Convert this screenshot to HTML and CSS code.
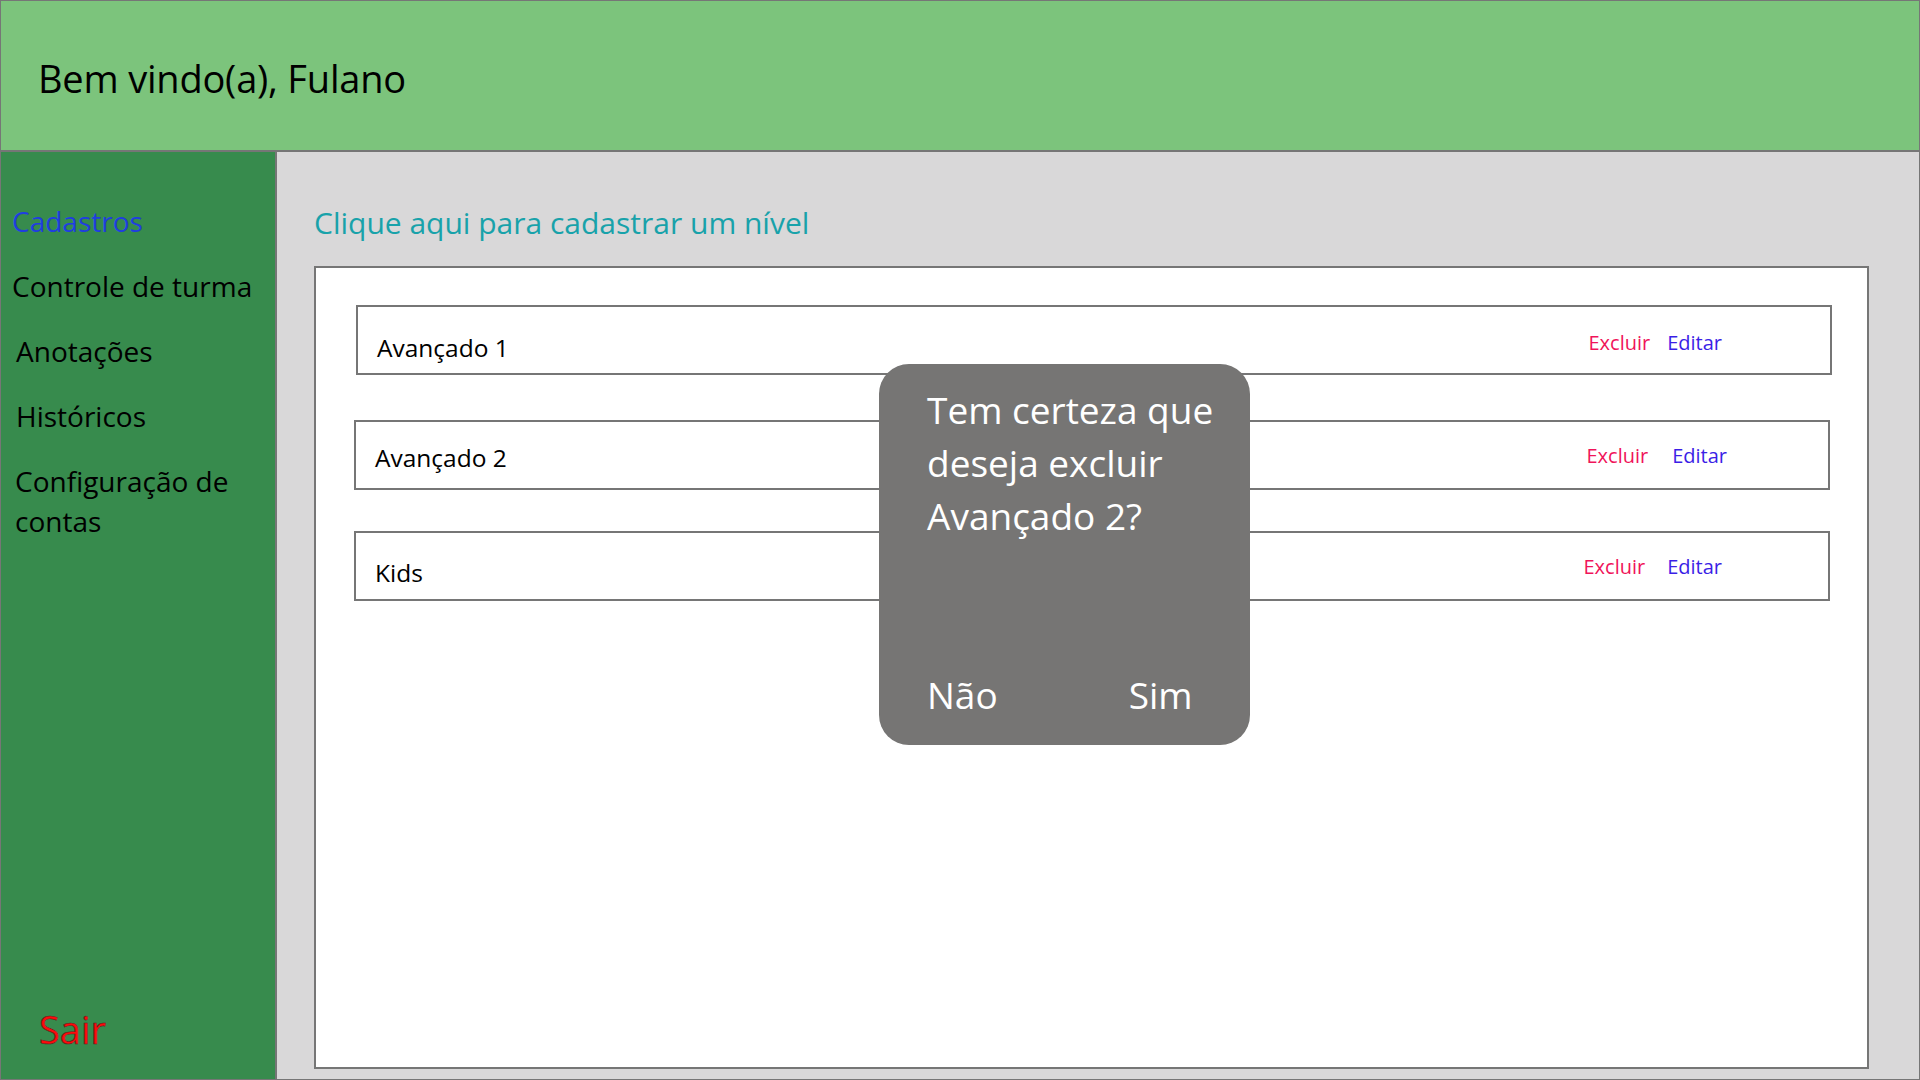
FILE: index.html
```html
<!DOCTYPE html>
<html lang="pt-BR">
<head>
<meta charset="utf-8">
<title>Níveis</title>
<link rel="stylesheet" href="styles.css">
</head>
<body>
<div class="app">
  <header class="topbar">
    <h1 class="welcome">Bem vindo(a), Fulano</h1>
  </header>
  <div class="body">
    <nav class="sidebar">
      <ul class="menu">
        <li class="menu-item active">Cadastros</li>
        <li class="menu-item">Controle de turma</li>
        <li class="menu-item indent">Anotações</li>
        <li class="menu-item indent">Históricos</li>
        <li class="menu-item indent2">Configuração de contas</li>
      </ul>
      <div class="logout">Sair</div>
    </nav>
    <main class="main">
      <a class="add-link">Clique aqui para cadastrar um nível</a>
      <section class="panel">
        <div class="row row-first">
          <span class="row-label">Avançado 1</span>
          <span class="actions"><span class="del">Excluir</span><span class="edit">Editar</span></span>
        </div>
        <div class="row row-second">
          <span class="row-label">Avançado 2</span>
          <span class="actions"><span class="del">Excluir</span><span class="edit">Editar</span></span>
        </div>
        <div class="row row-third">
          <span class="row-label">Kids</span>
          <span class="actions"><span class="del">Excluir</span><span class="edit">Editar</span></span>
        </div>
      </section>
    </main>
  </div>
  <div class="modal">
    <p class="modal-text">Tem certeza que deseja excluir Avançado 2?</p>
    <div class="modal-buttons">
      <span class="modal-btn">Não</span>
      <span class="modal-btn">Sim</span>
    </div>
  </div>
</div>
</body>
</html>
```
FILE: styles.css
```css
* { box-sizing: border-box; }
html, body { margin: 0; padding: 0; }
body {
  font-family: "Open Sans", "Noto Sans", sans-serif;
  color: #000;
}
.app {
  position: relative;
  width: 1920px;
  height: 1080px;
  border: 1px solid #767676;
  display: flex;
  flex-direction: column;
  overflow: hidden;
}
.topbar {
  height: 151px;
  flex: none;
  background: #7cc47c;
  border-bottom: 2px solid #767676;
  display: flex;
  align-items: center;
  padding-left: 37px;
  padding-top: 4px;
}
.welcome {
  margin: 0;
  font-weight: 400;
  font-size: 38px;
  letter-spacing: -0.2px;
}
.body {
  flex: 1;
  display: flex;
  min-height: 0;
}
.sidebar {
  width: 276px;
  flex: none;
  background: #378b4d;
  border-right: 2px solid #767676;
  display: flex;
  flex-direction: column;
  padding: 49px 0 27px 11px;
}
.menu {
  list-style: none;
  margin: 0;
  padding: 0;
  display: flex;
  flex-direction: column;
  gap: 25px;
}
.menu-item {
  font-size: 28px;
  line-height: 40px;
  padding-right: 20px;
}
.menu-item.indent { padding-left: 4px; }
.menu-item.indent2 { padding-left: 3px; padding-right: 30px; }
.menu-item.active { color: #1f3ee0; }
.logout {
  margin-top: auto;
  padding-left: 27px;
  font-size: 38px;
  line-height: 46px;
  color: #ff0a0a;
  -webkit-text-stroke: 0.6px #5b2020;
}
.main {
  flex: 1;
  background: #d9d8d9;
  display: flex;
  flex-direction: column;
  padding: 51px 50px 10px 37px;
}
.add-link {
  font-size: 30px;
  line-height: 40px;
  color: #18a2aa;
  margin-bottom: 23px;
}
.panel {
  flex: 1;
  background: #fff;
  border: 2px solid #767676;
  padding: 37px 35px 0 38px;
  display: flex;
  flex-direction: column;
}
.row {
  height: 70px;
  border: 2px solid #767676;
  display: flex;
  align-items: center;
  padding-left: 19px;
}
.row-first { margin-left: 2px; margin-bottom: 45px; }
.row-second { margin-right: 2px; margin-bottom: 41px; }
.row-third { margin-right: 2px; }
.row-label {
  font-size: 24.5px;
  padding-top: 14px;
}
.row-second .row-label { padding-top: 5px; }
.row-third .row-label { padding-top: 13px; }
.actions {
  margin-left: auto;
  margin-right: 108px;
  display: flex;
  gap: 17px;
  font-size: 20px;
  padding-top: 4px;
}
.row-second .actions { gap: 24px; margin-right: 101px; padding-top: 0; }
.row-third .actions { gap: 22px; margin-right: 106px; padding-top: 0; }
.del { color: #f0145a; }
.edit { color: #3b1ee6; }
.modal {
  position: absolute;
  left: 878px;
  top: 363px;
  width: 371px;
  height: 381px;
  background: #767574;
  border-radius: 30px;
  padding: 19px 30px 24px 48px;
  color: #fff;
  display: flex;
  flex-direction: column;
  justify-content: space-between;
}
.modal-text {
  margin: 0;
  font-size: 37px;
  line-height: 53px;
}
.modal-buttons {
  display: flex;
  gap: 131px;
  font-size: 37px;
  line-height: 53px;
}
```
